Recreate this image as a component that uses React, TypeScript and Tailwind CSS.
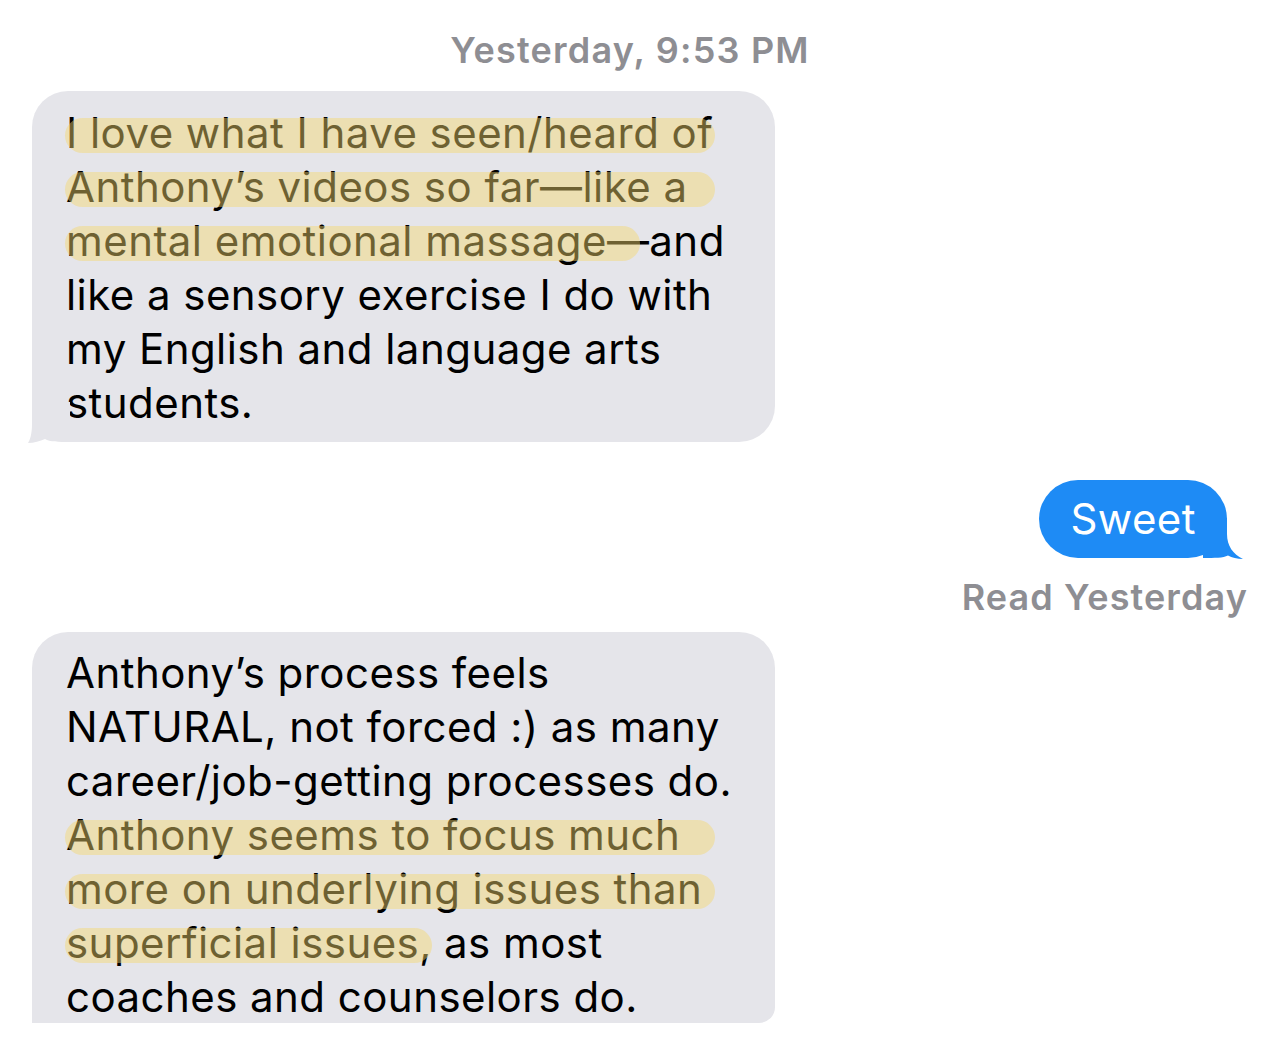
import React from "react";

const Line = ({ children, hl }: { children: React.ReactNode; hl?: string }) => (
  <div className="relative h-[54px] whitespace-nowrap leading-[54px]">
    {children}
    {hl && (
      <span
        className={`pointer-events-none absolute left-[-1px] top-[12px] h-[35px] rounded-full bg-[#f5d76e73] ${hl}`}
      />
    )}
  </div>
);

export default function App() {
  return (
    <div className="flex h-[1047px] w-[1270px] flex-col overflow-hidden bg-white font-['Inter',sans-serif] text-black">
      <div className="pr-[10px] pt-[29px] text-center text-[36px] font-semibold leading-[42px] tracking-[1.2px] text-[#8e8e93]">
        Yesterday, 9:53 PM
      </div>

      <div className="relative ml-[32px] mt-[20px] w-[743px] rounded-[36px] bg-[#e5e5ea] pb-[12px] pl-[34px] pt-[15px] text-[42px] tracking-[0.45px]">
        <Line hl="w-[650px]">I love what I have seen/heard of</Line>
        <Line hl="w-[650px]">Anthony’s videos so far—like a</Line>
        <Line hl="w-[575px]">mental emotional massage—and</Line>
        <Line>like a sensory exercise I do with</Line>
        <Line>my English and language arts</Line>
        <Line>students.</Line>
        <svg
          className="absolute bottom-[-1px] left-[-4px]"
          width="42"
          height="41"
          viewBox="0 0 42 41"
        >
          <path
            d="M42 0 L4 0 L4 22 C4 32 2 38 0 41 C6 41 12 39 17 37 C22 40 30 40 42 40 Z"
            fill="#e5e5ea"
          />
        </svg>
      </div>

      <div className="mt-[38px] flex justify-end pr-[43px]">
        <div className="relative h-[78px] rounded-[39px] bg-[#1e8bf5] px-[31px] pt-[12px] text-[42px] leading-[54px] tracking-[0.45px] text-white">
          Sweet
          <svg
            className="absolute bottom-[-1px] right-[-16px]"
            width="40"
            height="41"
            viewBox="0 0 40 41"
          >
            <path
              d="M0 0 L24 0 L24 16 C24 28 30 36 40 41 C34 41 29 39.5 25 37.5 C20 40 12 40 0 40 Z"
              fill="#1e8bf5"
            />
          </svg>
        </div>
      </div>

      <div className="mt-[18px] pr-[22px] text-right text-[36px] font-semibold leading-[42px] tracking-[1.1px] text-[#8e8e93]">
        Read Yesterday
      </div>

      <div className="ml-[32px] mt-[14px] h-[391px] w-[743px] shrink-0 overflow-hidden rounded-br-[16px] rounded-t-[36px] bg-[#e5e5ea] pl-[34px] pt-[14px] text-[42px] tracking-[0.45px]">
        <Line>Anthony’s process feels</Line>
        <Line>NATURAL, not forced :) as many</Line>
        <Line>career/job-getting processes do.</Line>
        <Line hl="w-[650px]">Anthony seems to focus much</Line>
        <Line hl="w-[650px]">more on underlying issues than</Line>
        <Line hl="w-[367px]">superficial issues, as most</Line>
        <Line>coaches and counselors do.</Line>
      </div>
    </div>
  );
}
